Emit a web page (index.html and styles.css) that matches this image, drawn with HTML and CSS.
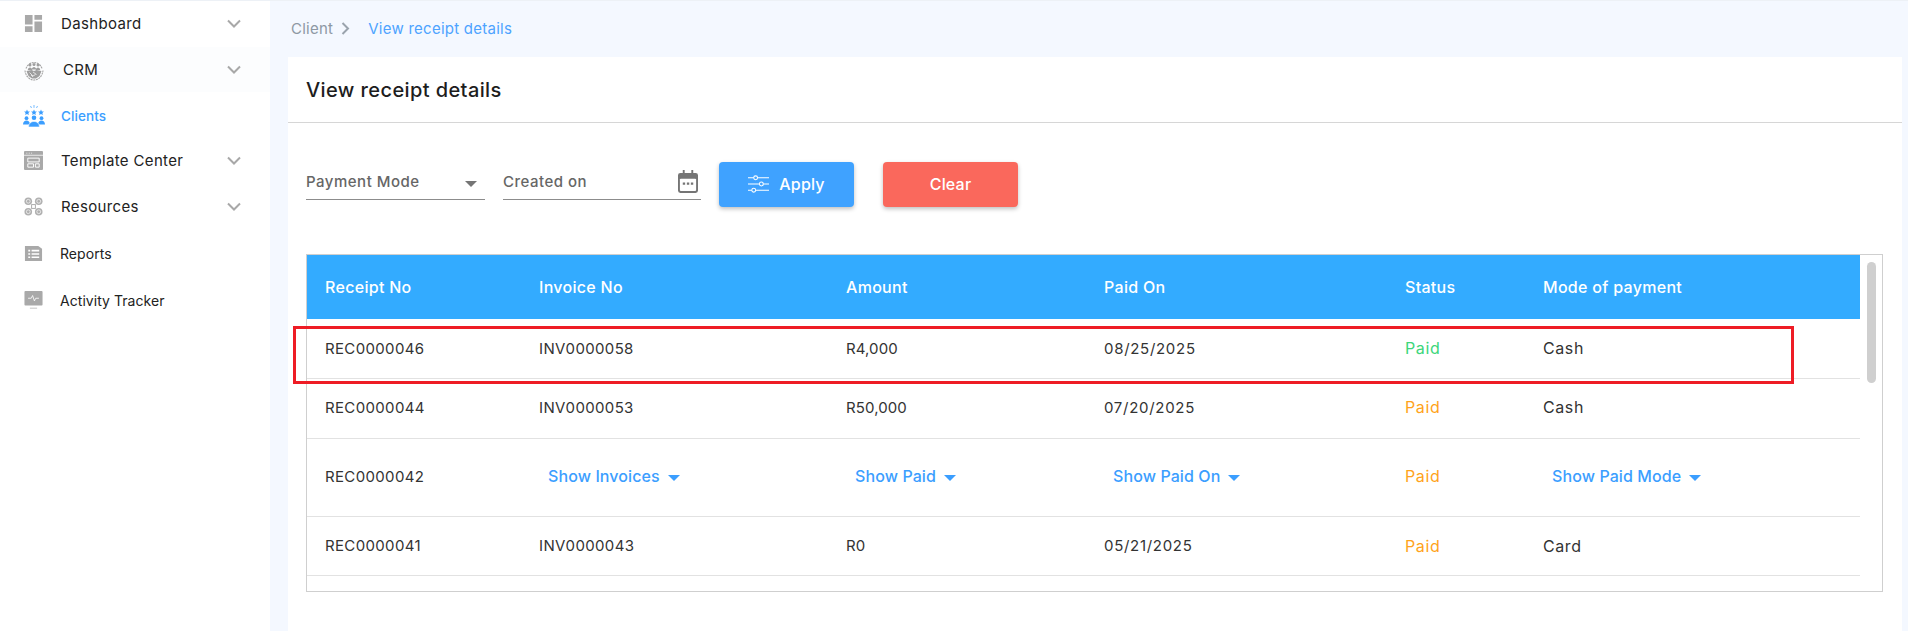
FILE: index.html
```html
<!DOCTYPE html>
<html lang="en">
<head>
<meta charset="utf-8">
<title>View receipt details</title>
<link rel="stylesheet" href="styles.css">
</head>
<body>
<aside class="sidebar">
  <nav class="nav">
    <a class="nav-item">
      <svg class="nav-icon" viewBox="0 0 20 20"><path fill="#a9a9a9" d="M1 1h8v10H1zM11 1h8v5h-8zM11 8h8v11h-8zM1 13h8v6H1z"/></svg>
      <span class="nav-label">Dashboard</span>
      <svg class="chev" viewBox="0 0 14 9"><path d="M1 1.500l6 6 6-6" fill="none" stroke="#a8a8a8" stroke-width="2"/></svg>
    </a>
    <a class="nav-item nav-crm">
      <svg class="nav-icon nav-icon-crm" viewBox="0 0 20 22" fill="none" stroke="#a5a5a5"><path d="M2 9.500a8.500 9 0 0 1 16 0" stroke-width="1.100" stroke-dasharray="2 .7"/><path d="M1 11.500c.5 5 4 9.500 9 9.500s8.500-4.500 9-9.500" stroke-width="1.100" stroke-dasharray="2 .7"/><g fill="#9e9e9e" stroke="none"><circle cx="6" cy="6" r="1.500"/><circle cx="10" cy="5.500" r="1.500"/><circle cx="14" cy="6" r="1.500"/><path d="M3.800 11c0-3.400 4.400-3.400 4.400 0zM7.800 10.500c0-3.400 4.400-3.400 4.400 0zM11.800 11c0-3.400 4.400-3.400 4.400 0z"/><path d="M2.500 12l5-1L10 12l2.500-1 5 1-2 5-3.500 2.500H8L4.500 17z"/></g><path d="M5.500 13.500l3.500 3.500 2.500-1.500M9 13l3.500 2.500M7 16l2 2" stroke="#fff" stroke-width=".7"/></svg>
      <span class="nav-label nav-label-crm">CRM</span>
      <svg class="chev" viewBox="0 0 14 9"><path d="M1 1.500l6 6 6-6" fill="none" stroke="#a8a8a8" stroke-width="2"/></svg>
    </a>
    <a class="nav-item nav-active">
      <svg class="nav-icon nav-icon-wide" viewBox="0 0 22 22" fill="#3b9eff"><path d="M4 4.500l.9 1.900 2 .2-1.500 1.400.4 2L4 9.100l-1.800.9.4-2L1.100 6.600l2-.2zM11 4.500l.9 1.900 2 .2-1.500 1.400.4 2-1.800-.9-1.800.9.4-2-1.500-1.400 2-.2zM18 4.500l.9 1.900 2 .2-1.500 1.400.4 2-1.800-.9-1.800.9.4-2-1.500-1.400 2-.2z"/><path d="M11 0v2.800M7.500 1l1 2M14.500 1l-1 2" stroke="#3b9eff" stroke-width=".7"/><circle cx="3.500" cy="13.200" r="1.900"/><circle cx="18.500" cy="13.200" r="1.900"/><circle cx="11" cy="12.800" r="2.300"/><path d="M0 19.500c0-5.300 7-5.300 7 0zM15 19.500c0-5.300 7-5.300 7 0z"/><path d="M5.500 22c0-7.500 11-7.500 11 0z" stroke="#fff" stroke-width=".6"/></svg>
      <span class="nav-label">Clients</span>
    </a>
    <a class="nav-item">
      <svg class="nav-icon" viewBox="0 0 20 20"><path fill="#a9a9a9" d="M1 0h18a1 1 0 0 1 1 1v18a1 1 0 0 1-1 1H1a1 1 0 0 1-1-1V1a1 1 0 0 1 1-1z"/><path d="M0 4.500h20" stroke="#fff" stroke-width=".8"/><path d="M2.500 2.300h1M5 2.300h1M7.500 2.300h1" stroke="#fff" stroke-width=".8"/><path d="M4 7.500h12v4H4zM4 13.500h6v3.500H4zM12 13.500h4v3.500h-4z" fill="none" stroke="#fff"/></svg>
      <span class="nav-label">Template Center</span>
      <svg class="chev" viewBox="0 0 14 9"><path d="M1 1.500l6 6 6-6" fill="none" stroke="#a8a8a8" stroke-width="2"/></svg>
    </a>
    <a class="nav-item">
      <svg class="nav-icon" viewBox="0 0 20 20" fill="#b0b0b0"><circle cx="4.500" cy="4.500" r="4"/><circle cx="15.500" cy="4.500" r="4"/><circle cx="4.500" cy="15.500" r="4"/><circle cx="15.500" cy="15.500" r="4"/><g fill="none" stroke="#fff" stroke-width=".7"><circle cx="4.500" cy="4.500" r="2"/><circle cx="15.500" cy="4.500" r="2"/><circle cx="4.500" cy="15.500" r="2"/><circle cx="15.500" cy="15.500" r="2"/></g><rect x="8" y="8" width="4" height="4" fill="#fff" stroke="#a9a9a9"/></svg>
      <span class="nav-label">Resources</span>
      <svg class="chev" viewBox="0 0 14 9"><path d="M1 1.500l6 6 6-6" fill="none" stroke="#a8a8a8" stroke-width="2"/></svg>
    </a>
    <a class="nav-item nav-small">
      <svg class="nav-icon" viewBox="0 0 20 20"><path fill="#a9a9a9" d="M1 2h14l4 3v13H1z"/><path d="M4.500 7h2M8 7h8M4.500 10.500h2M8 10.500h8M4.500 14h2M8 14h8" stroke="#fff" stroke-width="1.700"/></svg>
      <span class="nav-label">Reports</span>
    </a>
    <a class="nav-item nav-small">
      <svg class="nav-icon" viewBox="0 0 20 21"><rect y="0" width="20" height="16" rx="1" fill="#a9a9a9"/><path d="M4 8h3.500l1.500-3 2 6 1.500-3H16" fill="none" stroke="#fff" stroke-width=".9"/><path d="M6 19h8" stroke="#c9c9c9" stroke-width="1.200"/></svg>
      <span class="nav-label">Activity Tracker</span>
    </a>
  </nav>
</aside>

<main class="main">
  <div class="crumbs">
    <span class="crumb">Client</span>
    <svg class="crumb-sep" viewBox="0 0 9 13"><path d="M1.500 1l5.500 5.500-5.500 5.500" fill="none" stroke="#9aa3ad" stroke-width="2"/></svg>
    <span class="crumb-current">View receipt details</span>
  </div>

  <section class="card">
    <h1 class="card-title">View receipt details</h1>

    <div class="filters">
      <div class="field field-select">
        <span class="field-label">Payment Mode</span>
        <span class="caret caret-grey"></span>
      </div>
      <div class="field field-date">
        <span class="field-label">Created on</span>
        <svg class="cal" viewBox="0 0 21 24"><path fill="#757575" d="M5 0h2v3h7V0h2v3h2.500A2.500 2.500 0 0 1 21 5.500v16a2.500 2.500 0 0 1-2.500 2.500h-16A2.500 2.500 0 0 1 0 21.500v-16A2.500 2.500 0 0 1 2.500 3H5z"/><rect x="2" y="9" width="17" height="13" rx="1" fill="#fff"/><path fill="#757575" d="M5 13h2.500v2.500H5zM9.300 13h2.500v2.500H9.300zM13.500 13H16v2.500h-2.500z"/></svg>
      </div>
      <button class="btn btn-apply">
        <svg class="sliders" viewBox="0 0 22 18" fill="none" stroke="#fff" stroke-width="1.100"><path d="M0 2.500h6M10 2.500h12M0 9h12M16 9h6M0 15.500h4M8 15.500h14"/><circle cx="8" cy="2.500" r="2"/><circle cx="14" cy="9" r="2"/><circle cx="6" cy="15.500" r="2"/></svg>
        Apply
      </button>
      <button class="btn btn-clear">Clear</button>
    </div>

    <div class="table-box">
      <table class="receipts">
        <colgroup>
          <col class="c1"><col class="c2"><col class="c3"><col class="c4"><col class="c5"><col class="c6">
        </colgroup>
        <thead>
          <tr><th>Receipt No</th><th>Invoice No</th><th>Amount</th><th>Paid On</th><th>Status</th><th>Mode of payment</th></tr>
        </thead>
        <tbody>
          <tr class="row-a"><td>REC0000046</td><td>INV0000058</td><td class="money">R4,000</td><td class="date">08/25/2025</td><td class="word paid-green">Paid</td><td class="word">Cash</td></tr>
          <tr class="row-b"><td>REC0000044</td><td>INV0000053</td><td class="money">R50,000</td><td class="date">07/20/2025</td><td class="word paid-orange">Paid</td><td class="word">Cash</td></tr>
          <tr class="row-c"><td>REC0000042</td>
            <td><span class="show">Show Invoices<i class="caret"></i></span></td>
            <td><span class="show">Show Paid<i class="caret"></i></span></td>
            <td><span class="show">Show Paid On<i class="caret"></i></span></td>
            <td class="word paid-orange">Paid</td>
            <td><span class="show">Show Paid Mode<i class="caret"></i></span></td></tr>
          <tr class="row-d"><td>REC0000041</td><td>INV0000043</td><td class="money">R0</td><td class="date">05/21/2025</td><td class="word paid-orange">Paid</td><td class="word">Card</td></tr>
        </tbody>
      </table>
      <div class="scroll-thumb"></div>
      <div class="highlight"></div>
    </div>
  </section>
</main>
</body>
</html>
```

FILE: styles.css
```css
* { box-sizing: border-box; }
html, body { height: 100%; }
body {
  margin: 0;
  display: flex;
  height: 631px;
  overflow: hidden;
  background: #f4f8ff;
  font-family: Inter, "Noto Sans", sans-serif;
  color: #2f2f2f;
}
.sidebar {
  width: 270px;
  flex: none;
  background: #fff;
  border-top: 1px solid #edf1f6;
}
.nav { display: flex; flex-direction: column; }
.nav-item {
  display: flex;
  align-items: center;
  height: 45.7px;
  padding-left: 24px;
  font-size: 15px;
  letter-spacing: .35px;
  color: #222;
}
.nav-crm { background: #fcfdfe; }
.nav-active { color: #3b9eff; font-weight: 500; font-size: 13.500px; letter-spacing: .1px; padding-top: 1px; }
.nav-small { font-size: 14px; letter-spacing: .05px; height: 47px; padding-top: 2px; }
.nav-icon { width: 19px; height: 19px; flex: none; }
.nav-icon-crm { width: 20px; height: 22px; margin-right: -1px; margin-left: 0; }
.nav-icon-wide { width: 22px; height: 22px; margin-left: -1px; margin-right: -2px; }
.nav-label { margin-left: 18px; flex: 1; }
.nav-label-crm { margin-left: 20px; }
.nav-small .nav-label { margin-left: 17px; }
.chev { width: 14px; height: 9px; margin-right: 29px; flex: none; }

.main { flex: 1; display: flex; flex-direction: column; padding: 0 6px 0 18px; border-top: 1px solid #edf1f6; min-width: 0; }
.crumbs {
  height: 56px;
  display: flex;
  align-items: center;
  padding-left: 3px;
  font-size: 15px;
  letter-spacing: .25px;
  padding-bottom: 1px;
}
.crumb { color: #8e98a4; }
.crumb-sep { width: 9px; height: 13px; margin: 0 18px 0 8px; }
.crumb-current { color: #4da3ff; }

.card { flex: 1; background: #fff; }
.card-title {
  margin: 0;
  height: 66px;
  display: flex;
  align-items: center;
  padding-left: 18px;
  font-size: 20px;
  letter-spacing: .4px;
  font-weight: 500;
  color: #1d1d1d;
  border-bottom: 1px solid #d6d6d6;
}
.filters {
  display: flex;
  align-items: flex-start;
  padding: 39px 0 0 18px;
  height: 131px;
}
.field {
  height: 38px;
  display: flex;
  align-items: center;
  border-bottom: 1px solid #8c8c8c;
  font-size: 15px;
  letter-spacing: .5px;
  font-weight: 500;
  color: #666;
  padding-top: 2px;
}
.field-label { flex: 1; }
.field-select { width: 179px; margin-right: 18px; }
.field-date { width: 198px; margin-right: 18px; position: relative; }
.cal { width: 20px; height: 23px; margin: 0 3px 0 0; flex: none; }
.caret {
  display: inline-block;
  width: 0; height: 0;
  border-left: 6px solid transparent;
  border-right: 6px solid transparent;
  border-top: 6px solid #3b9eff;
  margin-left: 8px;
  vertical-align: 1px;
}
.caret-grey { border-top-color: #757575; margin: 4px 8px 0 0; }

.btn {
  height: 45px;
  width: 135px;
  border: 0;
  border-radius: 4px;
  display: flex;
  align-items: center;
  justify-content: center;
  font: 500 16px Inter, sans-serif;
  letter-spacing: .2px;
  color: #fff;
  padding: 0 0 2px;
  box-shadow: 0 2px 4px rgba(0,0,0,.25);
}
.btn-apply { background: #3fa2ff; margin-right: 29px; }
.btn-clear { background: #fa685c; }
.sliders { width: 21px; height: 18px; margin-right: 10px; }

.table-box {
  position: relative;
  margin-left: 18px;
  width: 1577px;
  height: 338px;
  border: 1px solid #cfcfcf;
}
.receipts { width: 1553px; table-layout: fixed; border-collapse: collapse; }
.c1 { width: 214px; } .c2 { width: 307px; } .c3 { width: 258px; }
.c4 { width: 301px; } .c5 { width: 138px; } .c6 { width: 335px; }
.receipts th {
  height: 64px;
  background: #33abff;
  color: #fff;
  font-size: 16px;
  letter-spacing: .3px;
  font-weight: 500;
  text-align: left;
  padding: 0 0 0 18px;
}
.receipts td {
  font-size: 15px;
  letter-spacing: .35px;
  padding: 0 0 0 18px;
  border-bottom: 1px solid #e2e2e2;
  color: #333;
}
.receipts .money { letter-spacing: .1px; }
.receipts .date { letter-spacing: .7px; }
.receipts .word { font-size: 16px; letter-spacing: .6px; }
.row-a td { height: 59px; }
.row-b td { height: 60px; padding-bottom: 2px; }
.row-c td { height: 78px; padding-bottom: 2px; }
.row-d td { height: 59px; }
.receipts .paid-green { color: #3dd67a; }
.receipts .paid-orange { color: #ffa31a; }
.show { color: #3b9eff; font-weight: 500; font-size: 16px; letter-spacing: .1px; padding-left: 9px; }

.scroll-thumb {
  position: absolute;
  top: 7px;
  left: 1560px;
  width: 9px;
  height: 121px;
  border-radius: 5px;
  background: #cfcfcf;
}
.highlight {
  position: absolute;
  top: 71px;
  left: -14px;
  width: 1501px;
  height: 58px;
  border: 3px solid #ee1c25;
  pointer-events: none;
}
```
